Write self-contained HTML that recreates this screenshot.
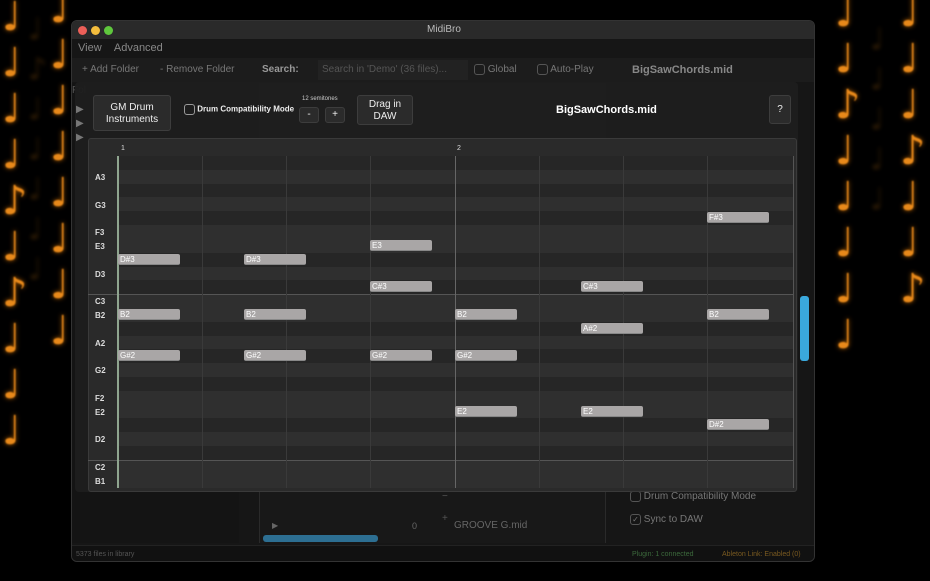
<!DOCTYPE html>
<html><head><meta charset="utf-8"><style>
*{margin:0;padding:0;box-sizing:border-box}
body{width:930px;height:581px;background:#000;position:relative;overflow:hidden;font-family:"Liberation Sans",sans-serif;color:#ccc}
.a{position:absolute}
.bgn{position:absolute;color:#e8891a;font-size:40px;line-height:46px;text-shadow:0 0 5px #b86200;font-family:"DejaVu Sans",sans-serif;width:40px;filter:blur(0.8px)}
.dim{position:absolute;color:#e8891a;opacity:.2;font-size:30px;line-height:40px;font-family:"DejaVu Sans",sans-serif;filter:blur(2px)}
.row{position:absolute;left:118px;width:675px;height:14px}
.l{background:#2f2f2f}.d{background:#262626}
.lab{position:absolute;left:95px;font-size:8px;color:#ddd;font-weight:bold}
.n{position:absolute;width:62px;height:11px;background:#a9a6a6;border-radius:2px;font-size:8px;color:#fff;padding-left:2px;line-height:11px;border-bottom:1px solid #888}
.vl{position:absolute;top:156px;height:332px;width:1px;background:#3a3a3a}
.btn{position:absolute;background:#2b2b2b;border:1px solid #3d3d3d;border-radius:3px;color:#eee;text-align:center;font-size:10px}
.cb{display:inline-block;width:11px;height:11px;border:1px solid #888;border-radius:3px;vertical-align:middle}
</style></head><body>
<div class="bgn" style="left:2px;top:-6px">♩<br>♩<br>♩<br>♩<br>♪<br>♩<br>♪<br>♩<br>♩<br>♩</div>
<div class="bgn" style="left:50px;top:-14px">♩<br>♩<br>♩<br>♩<br>♩<br>♩<br>♩<br>♩</div>
<div class="bgn" style="left:835px;top:-10px">♩<br>♩<br>♪<br>♩<br>♩<br>♩<br>♩<br>♩</div>
<div class="bgn" style="left:900px;top:-10px">♩<br>♩<br>♩<br>♪<br>♩<br>♩<br>♪</div>
<div class="dim" style="left:28px;top:10px">♩<br>♪<br>♩<br>♩<br>♩<br>♩<br>♩</div>
<div class="dim" style="left:870px;top:20px">♩<br>♩<br>♩<br>♩<br>♩</div>

<div class="a" style="left:71px;top:20px;width:744px;height:542px;background:#161616;border-radius:6px;overflow:hidden;border:1px solid #333">
 <div class="a" style="left:0;top:0;width:744px;height:18px;background:#2a2a2a;text-align:center;font-size:10px;line-height:18px;color:#bbb">MidiBro</div>
 <div class="a" style="left:6px;top:5px;width:9px;height:9px;border-radius:50%;background:#ec5f58"></div>
 <div class="a" style="left:19px;top:5px;width:9px;height:9px;border-radius:50%;background:#f4bd3d"></div>
 <div class="a" style="left:32px;top:5px;width:9px;height:9px;border-radius:50%;background:#5fc73d"></div>
 <div class="a" style="left:6px;top:21px;font-size:11px;color:#888">View &nbsp;&nbsp;&nbsp;Advanced</div>
 <div class="a" style="left:0;top:37px;width:744px;height:24px;background:#1c1c1c;font-size:10px;color:#777;line-height:24px">
  <span class="a" style="left:10px">+ Add Folder</span><span class="a" style="left:88px">- Remove Folder</span>
  <span class="a" style="left:190px;font-weight:bold;color:#999">Search:</span>
  <span class="a" style="left:246px;top:2px;width:150px;height:20px;background:#222;color:#555;padding-left:4px;line-height:20px">Search in 'Demo' (36 files)...</span>
  <span class="a" style="left:402px"><span class="cb" style="border-color:#555"></span> Global</span>
  <span class="a" style="left:465px"><span class="cb" style="border-color:#555"></span> Auto-Play</span>
  <span class="a" style="left:560px;font-weight:bold;font-size:11px;color:#888">BigSawChords.mid</span>
 </div>
 <div class="a" style="left:0;top:62px;width:167px;height:460px;background:#141414"></div>
 <div class="a" style="left:0;top:64px;font-size:10px;color:#555">Fol</div>
 <div class="a" style="left:187px;top:62px;width:347px;height:460px;background:#181818;border-left:1px solid #2a2a2a;border-right:1px solid #2a2a2a"></div>
 <div class="a" style="left:191px;top:514px;width:115px;height:7px;background:#2d6f92;border-radius:3px"></div>
 <div class="a" style="left:200px;top:500px;font-size:8px;color:#666">▶</div>
 <div class="a" style="left:340px;top:500px;font-size:9px;color:#666">0</div>
 <div class="a" style="left:382px;top:499px;font-size:10px;color:#666">GROOVE G.mid</div>
 <div class="a" style="left:370px;top:470px;font-size:10px;color:#555">−<br><br>+</div>
 <div class="a" style="left:558px;top:470px;font-size:10px;color:#777"><span class="cb" style="border-color:#555"></span> Drum Compatibility Mode</div>
 <div class="a" style="left:558px;top:493px;font-size:10px;color:#777"><span class="cb" style="border-color:#555;font-size:8px;line-height:9px;text-align:center">✓</span> Sync to DAW</div>
 <div class="a" style="left:0;top:524px;width:744px;height:18px;background:#111;border-top:1px solid #222;font-size:7px;line-height:18px">
  <span class="a" style="left:4px;color:#555">5373 files in library</span>
  <span class="a" style="left:560px;color:#3c6a3c">Plugin: 1 connected</span>
  <span class="a" style="left:650px;color:#7a5a20">Ableton Link: Enabled (0)</span>
 </div>
</div>

<div class="a" style="left:75px;top:82px;width:723px;height:410px;background:rgba(30,30,30,.96);border-radius:4px"></div>
<div class="a" style="left:76px;top:103px;font-size:10px;color:#777;line-height:14px">▶<br>▶<br>▶</div>
<div class="btn" style="left:93px;top:95px;width:78px;height:36px;padding-top:6px;font-size:10px;line-height:12px">GM Drum<br>Instruments</div>
<div class="a" style="left:184px;top:104px;font-size:8px;color:#eee;font-weight:bold"><span class="cb" style="border-color:#999"></span> Drum Compatibility Mode</div>
<div class="a" style="left:302px;top:96px;font-size:6px;color:#ccc">12 semitones</div>
<div class="btn" style="left:299px;top:107px;width:20px;height:16px;line-height:14px">-</div>
<div class="btn" style="left:325px;top:107px;width:20px;height:16px;line-height:14px">+</div>
<div class="btn" style="left:357px;top:95px;width:56px;height:30px;padding-top:3px;line-height:12px">Drag in<br>DAW</div>
<div class="a" style="left:556px;top:104px;font-size:11px;font-weight:bold;color:#fff">BigSawChords.mid</div>
<div class="btn" style="left:769px;top:95px;width:22px;height:29px;line-height:27px">?</div>

<div class="a" style="left:88px;top:138px;width:709px;height:354px;background:#2a2a2a;border:1px solid #3a3a3a;border-radius:3px"></div>
<div class="a" style="left:121px;top:145px;font-size:7px;color:#ddd">1</div>
<div class="a" style="left:457px;top:145px;font-size:7px;color:#ddd">2</div>
<div class="row d" style="top:156px"></div><div class="row l" style="top:170px"></div>
<div class="row d" style="top:184px"></div><div class="row l" style="top:197px"></div>
<div class="row d" style="top:211px"></div><div class="row l" style="top:225px"></div>
<div class="row l" style="top:239px"></div><div class="row d" style="top:253px"></div>
<div class="row l" style="top:267px"></div><div class="row d" style="top:280px"></div>
<div class="row l" style="top:294px;border-top:1px solid #555"></div><div class="row l" style="top:308px"></div>
<div class="row d" style="top:322px"></div><div class="row l" style="top:336px"></div>
<div class="row d" style="top:349px"></div><div class="row l" style="top:363px"></div>
<div class="row d" style="top:377px"></div><div class="row l" style="top:391px"></div>
<div class="row l" style="top:405px"></div><div class="row d" style="top:418px"></div>
<div class="row l" style="top:432px"></div><div class="row d" style="top:446px"></div>
<div class="row l" style="top:460px;border-top:1px solid #555"></div><div class="row l" style="top:474px"></div>
<div class="a" style="left:88px;top:294px;width:30px;height:1px;background:#555"></div>
<div class="a" style="left:88px;top:460px;width:30px;height:1px;background:#555"></div>
<div class="vl" style="left:202px"></div><div class="vl" style="left:286px"></div><div class="vl" style="left:370px"></div>
<div class="vl" style="left:455px;background:#666"></div><div class="vl" style="left:539px"></div><div class="vl" style="left:623px"></div><div class="vl" style="left:707px"></div><div class="vl" style="left:793px;background:#555"></div>
<div class="a" style="left:117px;top:156px;width:2px;height:332px;background:#8fa58f"></div>

<div class="lab" style="top:173px">A3</div><div class="lab" style="top:201px">G3</div><div class="lab" style="top:228px">F3</div>
<div class="lab" style="top:242px">E3</div><div class="lab" style="top:270px">D3</div><div class="lab" style="top:297px">C3</div>
<div class="lab" style="top:311px">B2</div><div class="lab" style="top:339px">A2</div><div class="lab" style="top:366px">G2</div>
<div class="lab" style="top:394px">F2</div><div class="lab" style="top:408px">E2</div><div class="lab" style="top:435px">D2</div>
<div class="lab" style="top:463px">C2</div><div class="lab" style="top:477px">B1</div>

<div class="n" style="left:118px;top:254px">D#3</div><div class="n" style="left:118px;top:309px">B2</div><div class="n" style="left:118px;top:350px">G#2</div>
<div class="n" style="left:244px;top:254px">D#3</div><div class="n" style="left:244px;top:309px">B2</div><div class="n" style="left:244px;top:350px">G#2</div>
<div class="n" style="left:370px;top:240px">E3</div><div class="n" style="left:370px;top:281px">C#3</div><div class="n" style="left:370px;top:350px">G#2</div>
<div class="n" style="left:455px;top:309px">B2</div><div class="n" style="left:455px;top:350px">G#2</div><div class="n" style="left:455px;top:406px">E2</div>
<div class="n" style="left:581px;top:281px">C#3</div><div class="n" style="left:581px;top:323px">A#2</div><div class="n" style="left:581px;top:406px">E2</div>
<div class="n" style="left:707px;top:212px">F#3</div><div class="n" style="left:707px;top:309px">B2</div><div class="n" style="left:707px;top:419px">D#2</div>

<div class="a" style="left:800px;top:296px;width:9px;height:65px;background:#3aa8dc;border-radius:3px"></div>
</body></html>
